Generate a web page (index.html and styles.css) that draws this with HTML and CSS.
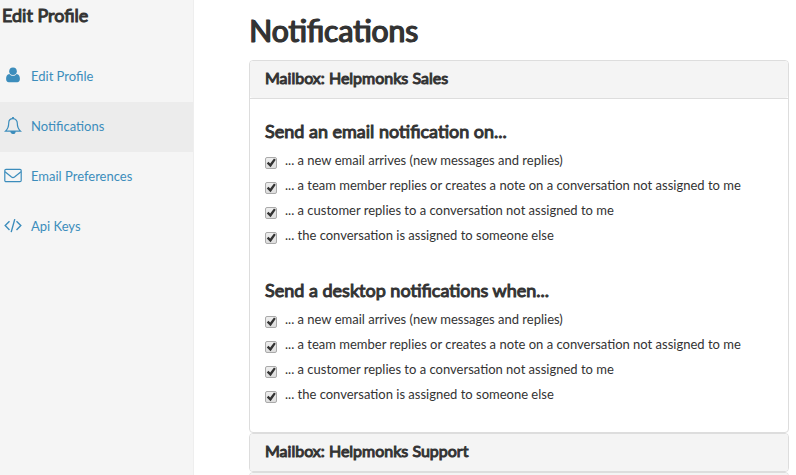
FILE: index.html
```html
<!DOCTYPE html>
<html lang="en">
<head>
    <meta charset="UTF-8">
    <meta name="viewport" content="width=device-width, initial-scale=1.0">
    <title>Notifications</title>
    <link rel="stylesheet" href="styles.css">
</head>
<body>
    <aside class="sidebar">
        <h2 class="sidebar-title">Edit Profile</h2>
        <nav class="menu">
            <a href="#profile">
                <svg class="icon" viewBox="0 0 18 18" fill="currentColor"><circle cx="9" cy="4.2" r="3.8"/><path d="M5.4 6.9C3.1 7.1 2.1 9.1 2.1 11.8C2.1 14 3 15.200 4.800 15.200H13.200C15 15.200 15.900 14 15.900 11.800C15.900 9.100 14.900 7.100 12.600 6.900C11.700 8.200 10.400 8.800 9 8.800S6.300 8.200 5.400 6.900Z"/></svg>
                Edit Profile
            </a>
            <a href="#notifications" class="active">
                <svg class="icon" viewBox="0 0 18 18" fill="none" stroke="currentColor" stroke-width="1.200"><path d="M9 1.700C6.200 1.700 4.700 3.800 4.700 6.200C4.700 10 3.600 12.100 1.500 14.100H16.500C14.400 12.100 13.300 10 13.300 6.200C13.300 3.800 11.800 1.700 9 1.700Z"/><path d="M7 14.500H11A2 2 0 0 1 7 14.500Z" fill="currentColor"/><path d="M9 .1V1.900" stroke-width="1.800"/></svg>
                Notifications
            </a>
            <a href="#preferences">
                <svg class="icon" viewBox="0 0 18 18" fill="none" stroke="currentColor" stroke-width="1.200"><rect x=".8" y="2.400" width="16.400" height="12.200" rx="1.200"/><path d="M1 4.800L7.500 10Q9 11.100 10.500 10L17 4.800"/></svg>
                Email Preferences
            </a>
            <a href="#api">
                <svg class="icon" viewBox="0 0 18 18" fill="none" stroke="currentColor" stroke-width="1.400"><path d="M5.500 4.300L1.200 8.600L5.500 12.900M12.500 4.300L16.800 8.600L12.500 12.900M10.800 2.100L7.200 15.100"/></svg>
                Api Keys
            </a>
        </nav>
    </aside>

    <main class="content">
        <h1>Notifications</h1>

        <section class="panel">
            <h4 class="panel-heading">Mailbox: Helpmonks Sales</h4>
            <div class="panel-body">
                <!-- Email notifications -->
                <div class="group">
                    <h3>Send an email notification on...</h3>
                    <label><input type="checkbox" checked> ... a new email arrives (new messages and replies)</label>
                    <label><input type="checkbox" checked> ... a team member replies or creates a note on a conversation not assigned to me</label>
                    <label><input type="checkbox" checked> ... a customer replies to a conversation not assigned to me</label>
                    <label><input type="checkbox" checked> ... the conversation is assigned to someone else</label>
                </div>
                <!-- Desktop notifications -->
                <div class="group">
                    <h3>Send a desktop notifications when...</h3>
                    <label><input type="checkbox" checked> ... a new email arrives (new messages and replies)</label>
                    <label><input type="checkbox" checked> ... a team member replies or creates a note on a conversation not assigned to me</label>
                    <label><input type="checkbox" checked> ... a customer replies to a conversation not assigned to me</label>
                    <label><input type="checkbox" checked> ... the conversation is assigned to someone else</label>
                </div>
            </div>
        </section>

        <section class="panel">
            <h4 class="panel-heading">Mailbox: Helpmonks Support</h4>
        </section>

        <section class="panel">
            <div class="panel-heading"></div>
        </section>
    </main>
</body>
</html>
```

FILE: styles.css
```css
/* General styles */
* {
    box-sizing: border-box;
}

body {
    margin: 0;
    display: flex;
    min-height: 100vh;
    font-family: Lato, sans-serif;
    font-size: 13px;
    line-height: 20px;
    color: #333;
    background-color: #fff;
}

h1, h2, h3, h4 {
    margin: 0;
    font-weight: 400;
    -webkit-text-stroke: 1px currentColor;
}

/* Sidebar */
.sidebar {
    flex: 0 0 194px;
    background-color: #f5f5f5;
    border-right: 1px solid #eee;
}

.sidebar-title {
    padding: 5px 2px 27px;
    font-size: 18px;
}

.menu a {
    display: flex;
    align-items: center;
    gap: 9px;
    height: 50px;
    padding: 0 0 2px 4px;
    color: #3c8dbc;
    text-decoration: none;
}

.menu a.active {
    background-color: #ececec;
}

.icon {
    width: 18px;
    height: 18px;
}

/* Main content */
.content {
    flex: 1;
    padding: 10px 7px 0 55px;
}

h1 {
    margin-bottom: 10px;
    font-size: 30px;
    line-height: 40px;
    text-shadow: 1px 0 currentColor;
}

/* Mailbox panels */
.panel {
    border: 1px solid #ddd;
    border-radius: 4px;
}

.panel-heading {
    padding: 7px 15px 10px;
    font-size: 16px;
    background-color: #f4f4f4;
    border-radius: 3px;
}

.panel-body {
    padding: 15px;
    border-top: 1px solid #ddd;
}

.group {
    padding-bottom: 13px;
}

.group + .group {
    padding: 10px 0 8px;
}

h3 {
    padding: 7px 0 9px;
    font-size: 18px;
}

label {
    display: flex;
    gap: 8px;
    height: 25px;
}

/* Checkbox with a light gradient face */
input {
    appearance: none;
    width: 12px;
    height: 12px;
    margin: 7px 0 0;
    border: 1px solid #aaa;
    border-radius: 2px;
    background: linear-gradient(#eee, #ddd);
}

input:checked::before {
    content: "";
    display: block;
    height: 10px;
    background-color: #333;
    clip-path: polygon(8% 54%, 24% 38%, 42% 55%, 80% 4%, 98% 18%, 46% 92%);
}
```
